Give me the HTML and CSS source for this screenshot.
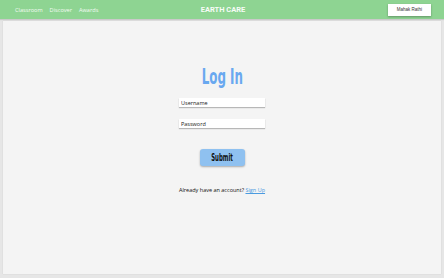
FILE: index.html
```html
<html>
    <head>
        <link rel="stylesheet" href="styles.css">
    </head>
    <body>
        <div class="navBar">
            <div class="navLinks">
                <a>Classroom</a>
                <a>Discover</a>
                <a>Awards</a>
            </div>
            <div class="navTitle">EARTH CARE</div>
            <div class="navUser">
                <button class="userButton">Mahak Rathi</button>
            </div>
        </div>
        <div class="pageBody">
            <div class="loginBox">
                <h1 class="loginTitle"><span class="narrowText">Log In</span></h1>
                <input class="loginField" type="text" placeholder="Username">
                <input class="loginField" type="password" placeholder="Password">
                <button class="submitButton"><span class="narrowText">Submit</span></button>
                <div class="signUpLine">Already have an account? <a class="signUpLink">Sign Up</a></div>
            </div>
        </div>
    </body>
</html>
```
FILE: styles.css
```css
body {
  margin: 0;
  background: #e6e6e6;
  font-family: "Open Sans", "Liberation Sans", sans-serif;
}
.navBar {
  height: 19px;
  background: #8ed492;
  display: grid;
  grid-template-columns: 1fr auto 1fr;
  align-items: center;
  padding: 0 13px 0 15px;
  box-shadow: 0 1px 1px rgba(0, 0, 0, 0.12);
}
.navLinks {
  display: flex;
  gap: 7px;
}
.navLinks a {
  color: #f4fbf4;
  font-size: 5.6px;
}
.navTitle {
  color: #f7fcf7;
  font-size: 7.5px;
  font-weight: bold;
  font-family: "Roboto", "Liberation Sans", sans-serif;
}
.navUser {
  display: flex;
  justify-content: flex-end;
}
.userButton {
  background: #fff;
  border: none;
  width: 43px;
  height: 12px;
  font-size: 4.5px;
  color: #333;
  padding: 0;
  box-shadow: 0 1px 2px rgba(0, 0, 0, 0.3);
  font-family: "Liberation Sans", sans-serif;
}
.pageBody {
  margin: 2px 3px 0 3px;
  height: 253px;
  background: #f4f4f4;
  box-shadow: 0 0 1px rgba(0, 0, 0, 0.15);
}
.loginBox {
  display: flex;
  flex-direction: column;
  align-items: center;
  padding-top: 44px;
}
.narrowText {
  display: inline-block;
  transform: scaleX(0.6);
}
.loginTitle {
  margin: 0;
  font-family: "DejaVu Sans Condensed", "DejaVu Sans", sans-serif;
  font-weight: bold;
  font-size: 22px;
  color: #69a8f0;
  line-height: 24px;
}
.loginField {
  width: 86px;
  height: 9px;
  margin-top: 9px;
  border: none;
  background: #fff;
  box-shadow: 0 1px 1px rgba(0, 0, 0, 0.25);
  font-size: 5.5px;
  padding: 0 2px;
  box-sizing: border-box;
  font-family: "Open Sans", sans-serif;
}
.loginField + .loginField {
  margin-top: 12px;
}
.loginField::placeholder {
  color: #222;
}
.submitButton {
  margin-top: 21px;
  width: 45px;
  height: 17px;
  border: none;
  border-radius: 3px;
  background: #8fc1f0;
  box-shadow: 0 1px 2px rgba(0, 0, 0, 0.3);
  font-family: "DejaVu Sans Condensed", "DejaVu Sans", sans-serif;
  font-weight: bold;
  font-size: 10px;
  color: #111;
  padding: 0;
}
.signUpLine {
  margin-top: 20px;
  font-size: 5.5px;
  color: #111;
}
.signUpLink {
  color: #4b9be0;
  text-decoration: underline;
}
```
